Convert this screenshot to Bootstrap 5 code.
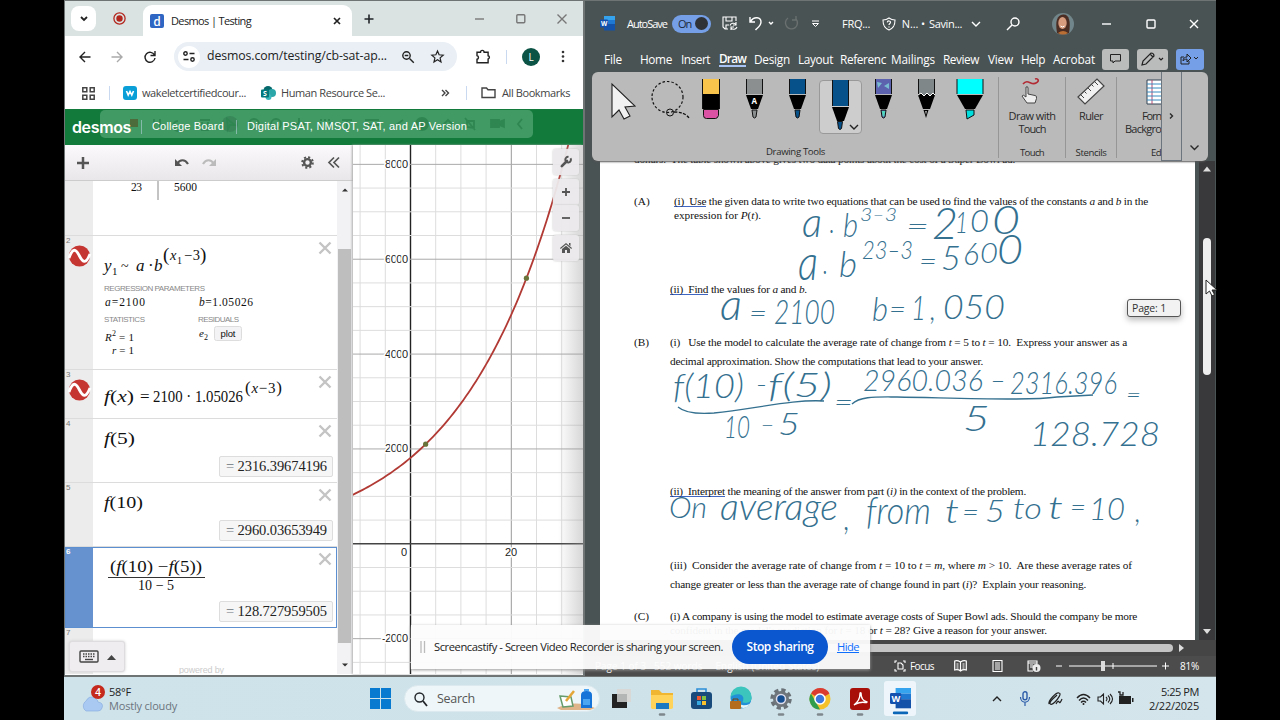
<!DOCTYPE html>
<html lang="en">
<head>
    <meta charset="UTF-8">
    <meta name="viewport" content="width=device-width, initial-scale=1.0">
    <link href="https://cdn.jsdelivr.net/npm/bootstrap@5.3.0/dist/css/bootstrap.min.css" rel="stylesheet">
    <title>Desmos | Testing</title>
    <style>
        body { background: #000; font-family: "Open Sans", "Noto Sans", sans-serif; font-size: 11px; line-height: 1.2; color: #222; overflow: hidden; }
        svg { display: block; flex: none; overflow: visible; }
        .fit { display: inline-block; white-space: nowrap; flex: none; }
        .line-icon { fill: none; stroke: currentColor; stroke-width: 1.4; }
        .bar-grid { display: grid; align-items: center; justify-items: start; }
        .desktop { width: 1152px; height: 720px; margin-left: 64px; }
        .windows { height: 677px; background: #6e7373; }

        /* browser window */
        .browser { width: 518px; height: 674px; margin: 1px 2px 0 1px; background: #fff; }
        .tab-strip { height: 35px; background: #dae3e2; grid-template-columns: 6px 42px 30px 209px 12px 111px 41px 41px 26px; color: #777; }
        .chev-btn { width: 25px; height: 25px; border-radius: 8px; background: #fff; color: #222; }
        .open-tab { width: 209px; height: 31px; margin-top: 4px; background: #fff; border-radius: 9px 9px 0 0; grid-template-columns: 7px 21px 162px 19px; color: #222; }
        .toolbar { height: 41px; grid-template-columns: 14px 32px 33px 30px 302px 30px 16px 39px 20px; background: #fff; }
        .address { width: 283px; height: 29px; border-radius: 15px; background: #e9eff5; grid-template-columns: 4px 29px 195px 29px 25px; font-size: 12.3px; }
        .site-info { width: 22px; height: 22px; border-radius: 50%; background: #fff; }
        .avatar-l { width: 18px; height: 18px; border-radius: 50%; background: #0b5345; color: #fff; font-size: 10px; }
        .bookmarks { height: 32px; grid-template-columns: 17px 27px 14px 19px 119px 20px 160px 25px 15px 21px 81px; color: #444; }
        .vline { width: 1px; height: 14px; background: #c9d9f0; }
        .green-bar { height: 36px; background: #127a3b; position: relative; color: #fff; font-family: "Liberation Sans", sans-serif; grid-template-columns: 7px 69px 11px 84px 11px 240px; }
        .ghost-bar { position: absolute; left: 35px; top: 1px; width: 433px; height: 28px; border-radius: 5px; background: #419963; color: #2f8651; }
        .green-bar > .above { position: relative; }
        .logo-text { font: 600 16px "Inter", sans-serif; }
        .calc { height: 529px; }

        /* expression list */
        .expr-panel { width: 288px; }
        .expr-tools { height: 36px; background: linear-gradient(#fbf9fb, #e9e7e9); border-bottom: 1px solid #ccc; grid-template-columns: 12px 97px 28px 99px 27px 20px; color: #555; }
        .expr-list { height: 493px; overflow: hidden; }
        .expr-row { border-bottom: 1px solid #dcdcdc; }
        .gutter { width: 28px; background: #ececec; font: 8px "Liberation Sans", sans-serif; color: #777; padding: 0 1px 1px; flex: none; }
        .expr-main { width: 244px; padding: 5px 4px 5px 10px; }
        .formula, .result { font-family: "Liberation Serif", serif; fill: #111; }
        .i-var { font-style: italic; }
        .cap { font: 8px "Liberation Sans", sans-serif; fill: #888; }
        .result { width: 114px; height: 21px; border: 1px solid #ddd; background: #f6f6f6; border-radius: 2px; font-size: 14.5px; line-height: 18px; padding-left: 6px; }
        .row-pick { outline: 1px solid #5b8fd0; outline-offset: -1px; }
        .row-pick .gutter { background: #6693d0; color: #fff; font-weight: bold; }
        .vscroll { width: 15px; background: #f2f1f3; padding: 6px 0 5px; }
        .vscroll-thumb { width: 13px; height: 394px; background: #bebebe; margin: 57px 0 20px 1px; }
        .kbd-btn { position: absolute; left: 69px; top: 641px; width: 56px; height: 31px; background: #efedef; border: 1px solid #dedcde; border-radius: 3px; box-shadow: 0 0 3px #ccc; }
        .graph-pane { width: 230px; position: relative; box-shadow: -1px 0 2px #aaa; overflow: hidden; font: 11px "Liberation Sans", sans-serif; }
        .graph-shade { position: absolute; right: 0; top: 0; width: 25px; height: 100%; background: linear-gradient(90deg, transparent, #9a9a9a66); }
        .graph-tools { position: absolute; right: 4px; top: 4px; width: 26px; color: #555; }
        .graph-tools > div { background: #ebe9ebf2; border-radius: 3px; box-shadow: 0 0 2px #bbb; height: 26px; margin-bottom: 4px; }

        /* word processor window */
        .word { width: 631px; height: 675px; margin-top: 1px; background: #4a5354; color: #fff; }
        .title-row { height: 45px; grid-template-columns: 15px 27px 45px 50px 27px 35px 28px 26px 44px 17px 30px 42px 36px 45px 50px 44px 20px; }
        .toggle-on { width: 39px; height: 18px; border-radius: 9px; background: #759fe6; color: #1c2a3d; padding: 0 3px 0 6px; }
        .knob { width: 13px; height: 13px; border-radius: 50%; background: #2f3338; }
        .menu-row { height: 26px; font-size: 11.8px; grid-template-columns: 19px 36px 41px 38px 35px 44px 42px 51px 52px 45px 33px 32px 49px 35px 39px 28px; }
        .menu-row .pick { border-bottom: 2px solid #a9c3f5; font-weight: 600; }
        .sq-btn { height: 21px; border-radius: 3px; background: #babbbb; color: #222; }
        .share-btn { background: #759fe6; }
        .ribbon { width: 616px; height: 89px; margin-left: 7px; background: #bababa; border-radius: 6px; color: #2a2a2a; position: relative; box-shadow: 0 1px 2px #555; z-index: 2; }
        .tool-cell { width: 43px; height: 54px; }
        .tool-pick { background: #cdcdcd; border: 1px solid #999; border-radius: 4px; }
        .rib-group { border-left: 1px solid #969696; height: 81px; margin-top: 5px; overflow: hidden; font-size: 11px; }
        .rib-foot { font-size: 9.6px; }
        .grp-touch { width: 67px; margin-left: 7px; }
        .grp-ruler { width: 51px; }
        .grp-format { width: 45px; }
        .rib-next { width: 21px; }
        .work { height: 479px; }
        .page { width: 595px; height: 479px; margin-left: 15px; background: #fff; color: #111; overflow: hidden; font: 11.3px/14px "Liberation Serif", serif; }
        .page .mark-col { width: 70px; padding-left: 34px; flex: none; }
        .page p { margin: 0; height: 14px; }
        .page .clip-line { margin: -9px 0 0 34px; }
        .part-a { margin-top: 28px; }
        .part-b { margin-top: 39px; }
        .part-c { margin-top: 18px; }
        .page .sp5 { margin-top: 5px; }
        .page .sp60 { margin-top: 60px; }
        .page .sp116 { margin-top: 116px; }
        .gram { border-bottom: 1px solid #3f66c0; display: inline-block; height: 13px; }
        .word-scroll { width: 16px; margin-left: 4px; background: #39393b; }
        .word-thumb { width: 8px; height: 137px; background: #eee; border-radius: 4px; margin: 65px auto 253px; }
        .hscroll { height: 16px; background: #454545; padding-right: 31px; }
        .hthumb { width: 400px; height: 8px; border-radius: 4px; background: #c4c4c4; margin-right: 6px; }
        .status { height: 20px; background: #4c4c4c; grid-template-columns: 10px 299px 60px 38px 35px 29px 13px 93px 18px 30px; font-size: 10px; }

        /* things floating over both windows */
        .ink { position: absolute; left: 0; top: 0; width: 1280px; height: 720px; fill: #34708f; stroke: #34708f; stroke-width: 0; font: 300 30px "Lato", sans-serif; pointer-events: none; z-index: 3; }
        .ink path { fill: none; stroke-width: 1.3; }
        .page-tip { position: absolute; left: 1127px; top: 299px; width: 54px; height: 18px; border: 1px solid #555; border-radius: 3px; background: #f2f2f2; box-shadow: 0 3px 6px #bbb; color: #333; padding-left: 4px; z-index: 4; font-size: 10.5px; }
        .pointer { position: absolute; left: 1205px; top: 279px; z-index: 5; }
        .share-bar { position: absolute; left: 411px; top: 625px; width: 459px; height: 44px; background: #fcfcfcf5; box-shadow: 0 1px 3px #999; z-index: 6; grid-template-columns: 9px 14px 298px 105px 23px; font-size: 11.2px; }
        .stop-btn { width: 96px; height: 34px; background: #0b57d0; color: #fff; font-weight: 600; font-size: 12px; border: 0; border-radius: 17px; }

        /* taskbar */
        .taskbar { height: 43px; background: linear-gradient(90deg, #cfe3eb, #cde2e9 60%, #d5e5ec); grid-template-columns: 16px 29px 261px 34px 207px 40px 40px 39px 40px 39px 41px 34px 108px 28px 28px 28px 21px 21px 20px 61px; }
        .search-pill { width: 196px; height: 27px; border-radius: 14px; background: #eef6f9; border: 1px solid #dce9ee; grid-template-columns: 9px 23px 120px 37px; font-size: 12.5px; color: #555; }
        .task-pick { width: 32px; height: 35px; background: #eef6fb; border-radius: 3px; }
    </style>
</head>
<body>
<div class="desktop d-flex flex-column">
    <div class="windows d-flex">

        <!-- Browser -->
        <div class="browser">
            <div class="tab-strip bar-grid">
                <i></i>
                <div class="chev-btn d-flex align-items-center justify-content-center"><svg class="line-icon" width="8" height="5"><path d="M1 1l3 3 3-3" stroke-width="1.8"/></svg></div>
                <svg width="13" height="13"><circle cx="6.5" cy="6.5" r="5.6" fill="none" stroke="#b3261e" stroke-width="1.3"/><circle cx="6.5" cy="6.5" r="3.2" fill="#b3261e"/></svg>
                <div class="open-tab bar-grid">
                    <i></i>
                    <svg width="14" height="14"><rect width="14" height="14" rx="2" fill="#2f66c3"/><text x="3.5" y="11.5" font-size="12.5" font-weight="600" fill="#fff" font-family="Lato">d</text></svg>
                    <span class="fit" data-w="80">Desmos | Testing</span>
                    <svg class="line-icon" width="8" height="8"><path d="M1 1l6 6M7 1l-6 6" stroke-width="1.7"/></svg>
                </div>
                <i></i>
                <svg class="line-icon text-dark" width="10" height="10"><path d="M5 .5v9M.5 5h9" stroke-width="1.6"/></svg>
                <svg class="line-icon" width="10" height="10"><path d="M0 5h9"/></svg>
                <svg class="line-icon" width="10" height="10"><rect x=".8" y=".8" width="8" height="8" rx="1"/></svg>
                <svg class="line-icon" width="10" height="10"><path d="M.5.5l9 9M9.5.5l-9 9"/></svg>
            </div>
            <div class="toolbar bar-grid">
                <i></i>
                <svg class="line-icon" width="12" height="12"><path d="M11.5 6H1.5M6 1L1 6l5 5"/></svg>
                <svg class="line-icon" width="12" height="12" color="#aaa"><path d="M.5 6h10M6 1l5 5-5 5"/></svg>
                <svg class="line-icon" width="12" height="12"><path d="M10.500 4A5 5 0 1 0 11 7M11 0v4.500H6.500"/></svg>
                <div class="address bar-grid">
                    <i></i>
                    <div class="site-info d-flex align-items-center justify-content-center"><svg class="line-icon" width="12" height="11"><circle cx="2.500" cy="2.500" r="1.700"/><path d="M6.500 2.500h5M.5 8.500h5"/><circle cx="9.500" cy="8.500" r="1.700"/></svg></div>
                    <span class="fit" data-w="180">desmos.com/testing/cb-sat-ap...</span>
                    <svg class="line-icon" width="12" height="12"><circle cx="4.500" cy="4.500" r="3.700"/><path d="M7.500 7.500l4.300 4.300M2.700 4.500h3.600"/></svg>
                    <svg class="line-icon" width="13" height="13"><path d="M6.500 1l1.600 3.800 4.100.4-3.100 2.700.9 4-3.500-2.100L3 11.900l.9-4L.8 5.200l4.100-.4z" stroke-width="1.200"/></svg>
                </div>
                <svg class="line-icon" width="15" height="15"><path d="M1 3.200h3.500a1.800 1.800 0 0 1 3.600 0h4v3.500a1.700 1.700 0 0 1 0 3.300v3.700H1v-3.400a1.900 1.900 0 0 0 0-3.700z"/></svg>
                <i class="vline"></i>
                <div class="avatar-l d-flex align-items-center justify-content-center">L</div>
                <svg width="4" height="13" fill="#333"><circle cx="2" cy="2" r="1.300"/><circle cx="2" cy="6.500" r="1.300"/><circle cx="2" cy="11" r="1.300"/></svg>
            </div>
            <div class="bookmarks bar-grid">
                <i></i>
                <svg class="line-icon" width="13" height="13"><path d="M.8.8h4v4h-4zM8.200.8h4v4h-4zM.8 8.200h4v4h-4zM8.200 8.200h4v4h-4z" stroke-width="1.500"/></svg>
                <i class="vline"></i>
                <svg width="14" height="14"><rect width="14" height="14" rx="3" fill="#0b9fd8"/><path d="M3.500 5l1.700 4L7 5.500 8.800 9l1.700-4" stroke="#fff" stroke-width="1.600" fill="none"/></svg>
                <span class="fit" data-w="104">wakeletcertifiedcour...</span>
                <svg width="15" height="14"><circle cx="7" cy="4.500" r="4.500" fill="#05686b"/><circle cx="11" cy="7" r="4" fill="#2aa5a8"/><circle cx="7.500" cy="11" r="3" fill="#37b6bb"/><rect y="3.500" width="8" height="8" rx="1" fill="#03787c"/><text x="2" y="10" font-size="7" font-weight="700" fill="#fff">S</text></svg>
                <span class="fit" data-w="104">Human Resource Se...</span>
                <svg class="line-icon" width="8" height="8"><path d="M1 1l3 3-3 3M4.500 1l3 3-3 3"/></svg>
                <i class="vline"></i>
                <svg class="line-icon" width="15" height="12"><path d="M1 10.500V1h4.500l1.500 1.800h7v7.700z"/></svg>
                <span class="fit" data-w="68">All Bookmarks</span>
            </div>
            <div class="green-bar bar-grid">
                <div class="ghost-bar"><svg width="433" height="28" fill="none" stroke="currentColor" stroke-width="1.800">
                    <rect x="30" y="9" width="8" height="8" fill="#4d6c3c" stroke="none"/>
                    <path d="M54 9v9M60 9v9M78 11a5 5 0 1 0 5 4M100 10h10M102 12v8h6v-8"/><circle cx="130" cy="14" r="8" fill="#38885a" stroke="none"/><path d="M127 9l8 6h-5l-2 4z"/><circle cx="154" cy="14" r="5"/><circle cx="176" cy="14" r="5"/><path d="M199 8v12M193 14h12"/><path d="M220 10h10v8h-10z" stroke-dasharray="2"/><path d="M242 10h10M247 10v9M265 10h14M265 15h14M293 17l10-7"/><circle cx="322" cy="14" r="6" fill="currentColor"/><path d="M342 16l6-6 6 6M365 8l10 12M367 17V11h7v7z"/><path d="M391 10h8v7h-8z M399 12l5-2v7l-5-2z" fill="currentColor"/><path d="M422 9l-4 5 4 5"/></svg></div>
                <i></i>
                <span class="above fit logo-text" data-w="59">desmos</span>
                <i class="above vline opacity-50"></i>
                <span class="above fit" data-w="72">College Board</span>
                <i class="above vline opacity-50"></i>
                <span class="above fit" data-w="220">Digital PSAT, NMSQT, SAT, and AP Version</span>
            </div>
            <div class="calc d-flex">
                <div class="expr-panel">
                    <div class="expr-tools bar-grid">
                        <i></i>
                        <svg class="line-icon" width="12" height="12"><path d="M6 0v12M0 6h12" stroke-width="2.500"/></svg>
                        <svg class="line-icon" width="15" height="10"><path d="M14 6C11 1 6 1 3 6" stroke-width="2.200"/><path d="M1 1v7h7z" fill="currentColor" stroke="none"/></svg>
                        <svg class="line-icon" width="15" height="10" color="#bbb"><path d="M1 6C4 1 9 1 12 6" stroke-width="2.200"/><path d="M14 1v7H7z" fill="currentColor" stroke="none"/></svg>
                        <svg class="line-icon" width="13" height="13"><circle cx="6.500" cy="6.500" r="3.400" stroke-width="2.400"/><circle cx="6.500" cy="6.500" r="5.300" stroke-width="2" stroke-dasharray="2.080"/></svg>
                        <svg class="line-icon" width="12" height="11"><path d="M6 .5l-5 5 5 5M11 .5l-5 5 5 5" stroke-width="1.700"/></svg>
                    </div>
                    <div class="d-flex">
                        <div class="expr-list">
                            <div class="expr-row d-flex">
                                <div class="gutter"></div>
                                <svg class="formula" width="244" height="54" font-size="11.500"><text x="38" y="10" textLength="11">23</text><path d="M65 0v19" stroke="#888"/><text x="81" y="10" textLength="23">5600</text></svg>
                            </div>
                            <div class="expr-row d-flex">
                                <div class="gutter">2<svg width="26" height="22"><use href="#wave" x="3"/></svg></div>
                                <div class="expr-main d-flex justify-content-between">
                                    <svg class="formula" width="200" height="123" font-size="17">
                                        <g class="i-var"><text x="1" y="30">y</text><text x="33" y="30">a</text><text x="51" y="30">b</text><text x="67" y="19" font-size="14.500">x</text></g>
                                        <text x="9" y="34" font-size="11">1</text><text x="18" y="30" font-size="14">~</text><text x="45" y="30">·</text><text x="60" y="20" font-size="19">(</text><text x="74" y="23" font-size="10">1</text><text x="81" y="19" font-size="14.500" textLength="16">−3</text><text x="97" y="20" font-size="19">)</text>
                                        <text x="1" y="50" class="cap" textLength="101">REGRESSION PARAMETERS</text>
                                        <text x="2" y="65" font-size="11.500" textLength="40"><tspan class="i-var">a</tspan>=2100</text><text x="96" y="65" font-size="11.500" textLength="54"><tspan class="i-var">b</tspan>=1.05026</text>
                                        <text x="1" y="81" class="cap" textLength="41">STATISTICS</text><text x="95" y="81" class="cap" textLength="41">RESIDUALS</text>
                                        <text x="2" y="100" font-size="11" class="i-var">R</text><text x="9" y="95" font-size="8">2</text><text x="16" y="100" font-size="11" textLength="15">=1</text>
                                        <text x="9" y="113" font-size="11" textLength="22"><tspan class="i-var">r</tspan>=1</text>
                                        <text x="96" y="96" font-size="11" class="i-var">e</text><text x="101" y="99" font-size="8">2</text>
                                        <rect x="111.500" y="85.500" width="27" height="14" rx="2" fill="#f3f3f5" stroke="#ddd"/><text x="117.500" y="96" font-size="9.500" textLength="15" font-family="Liberation Sans">plot</text>
                                    </svg>
                                    <svg width="16" height="14"><use href="#cross"/></svg>
                                </div>
                            </div>
                            <div class="expr-row d-flex">
                                <div class="gutter">3<svg width="26" height="22"><use href="#wave" x="3"/></svg></div>
                                <div class="expr-main d-flex justify-content-between">
                                    <svg class="formula" width="190" height="38" font-size="17"><text x="1" y="27" textLength="30" lengthAdjust="spacingAndGlyphs"><tspan class="i-var">f</tspan>(<tspan class="i-var">x</tspan>)</text><text x="37" y="27">=</text><text x="50" y="27" textLength="90" lengthAdjust="spacingAndGlyphs">2100 · 1.05026</text><text x="142" y="18" font-size="15" textLength="37"><tspan font-size="17">(</tspan><tspan class="i-var">x</tspan>−3<tspan font-size="17">)</tspan></text></svg>
                                    <svg width="16" height="14"><use href="#cross"/></svg>
                                </div>
                            </div>
                            <div class="expr-row d-flex">
                                <div class="gutter">4</div>
                                <div class="expr-main">
                                    <div class="d-flex justify-content-between"><svg class="formula" width="120" height="32" font-size="17"><text x="1" y="20" textLength="31" lengthAdjust="spacingAndGlyphs"><tspan class="i-var">f</tspan>(5)</text></svg><svg width="16" height="14"><use href="#cross"/></svg></div>
                                    <div class="result ms-auto"><span class="fit" data-w="101"><span class="text-secondary">=</span> 2316.39674196</span></div>
                                </div>
                            </div>
                            <div class="expr-row d-flex">
                                <div class="gutter">5</div>
                                <div class="expr-main">
                                    <div class="d-flex justify-content-between"><svg class="formula" width="120" height="32" font-size="17"><text x="1" y="20" textLength="39" lengthAdjust="spacingAndGlyphs"><tspan class="i-var">f</tspan>(10)</text></svg><svg width="16" height="14"><use href="#cross"/></svg></div>
                                    <div class="result ms-auto"><span class="fit" data-w="101"><span class="text-secondary">=</span> 2960.03653949</span></div>
                                </div>
                            </div>
                            <div class="expr-row row-pick d-flex">
                                <div class="gutter">6</div>
                                <div class="expr-main">
                                    <div class="d-flex justify-content-between"><svg class="formula" width="120" height="49" font-size="16"><text x="7" y="20" textLength="92" lengthAdjust="spacingAndGlyphs">(<tspan class="i-var">f</tspan>(10) −<tspan class="i-var">f</tspan>(5))</text><path d="M5 25.500h97" stroke="#333"/><text x="35" y="38" font-size="14.500" textLength="36" lengthAdjust="spacingAndGlyphs">10 − 5</text></svg><svg width="16" height="14"><use href="#cross"/></svg></div>
                                    <div class="result ms-auto"><span class="fit" data-w="101"><span class="text-secondary">=</span> 128.727959505</span></div>
                                </div>
                            </div>
                            <div class="d-flex">
                                <div class="gutter">7</div>
                                <svg width="244" height="46"><text x="86" y="45" font-size="9" fill="#ccc" textLength="45" font-family="Liberation Sans">powered by</text></svg>
                            </div>
                        </div>
                        <div class="vscroll">
                            <svg width="15" height="5"><path d="M5 4.500l3-3 3 3z" fill="#333"/></svg>
                            <div class="vscroll-thumb"></div>
                            <svg width="15" height="5"><path d="M5 .5l3 3 3-3z" fill="#333"/></svg>
                        </div>
                    </div>
                </div>
                <div class="graph-pane">
                    <svg id="graph" width="230" height="531"></svg>
                    <div class="graph-shade"></div>
                    <div class="graph-tools">
                        <div class="d-flex align-items-center justify-content-center"><svg width="12" height="12" viewBox="0 0 12 12"><path d="M1.800 10.200L7 5" stroke="#555" stroke-width="2.600" stroke-linecap="round"/><path d="M10.500 2.200A2.800 2.800 0 1 1 8.500.9" fill="none" stroke="#555" stroke-width="2"/></svg></div>
                        <div class="mb-0 d-flex align-items-center justify-content-center"><svg class="line-icon" width="8" height="8"><path d="M4 0v8M0 4h8" stroke-width="1.800"/></svg></div>
                        <div class="d-flex align-items-center justify-content-center"><svg class="line-icon" width="8" height="8"><path d="M0 4h8" stroke-width="1.800"/></svg></div>
                        <div class="d-flex align-items-center justify-content-center"><svg width="12" height="10"><path d="M6 0l6 5-.7.900L6 1.600.7 5.900 0 5zM2 6l4-3.300L10 6v4H7V7H5v3H2zM9 0h1.500v3L9 2z" fill="#555"/></svg></div>
                    </div>
                </div>
            </div>
        </div>

        <!-- Word processor -->
        <div class="word">
            <div class="title-row bar-grid">
                <i></i>
                <svg width="15" height="15"><use href="#wordlogo"/></svg>
                <span class="fit" data-w="40">AutoSave</span>
                <div class="toggle-on d-flex align-items-center justify-content-between"><span class="fit" data-w="13">On</span><i class="knob"></i></div>
                <svg class="line-icon" width="16" height="15"><path d="M6 13H3L1 11V1h13v4M4 1v4h6V1M4 13V9h3M8 9.500a3.500 3.500 0 0 1 6-1M14 6v3h-3M15 11a3.500 3.500 0 0 1-6 1M9 14v-3h3" stroke-width="1.100"/></svg>
                <svg class="line-icon" width="26" height="15"><path d="M1 1v5h5M1.500 5.500C5 0 12 1 12 6c0 4-4 6-5.500 8M20 6l2 2 2-2"/></svg>
                <svg class="line-icon" width="15" height="15" color="#69706f"><path d="M12 3A6 6 0 1 1 4 2M12 0v4H8"/></svg>
                <svg class="line-icon" width="8" height="8"><path d="M0 1h7" stroke-width="1"/><path d="M.5 3.500h6l-3 3z" stroke-width="1"/></svg>
                <span class="fit ms-1" data-w="28">FRQ...</span>
                <svg class="line-icon" width="14" height="14"><path d="M7 1c2 1.500 4 2 6 2 0 5-1 8-6 10C2 11 1 8 1 3c2 0 4-.5 6-2z" stroke-width="1.100"/><path d="M5.300 5.300c.3-2 3.400-1.600 3.200.2C8.300 6.500 7 6.700 7 8M7 9.500v1" stroke-width="1.200"/></svg>
                <span class="fit" data-w="26">&nbsp;N... •</span>
                <span class="fit" data-w="33">Savin...</span>
                <svg class="line-icon" width="10" height="6"><path d="M1 1l4 4 4-4"/></svg>
                <svg class="line-icon" width="13" height="13"><circle cx="8" cy="5" r="4"/><path d="M5 8l-5 5"/></svg>
                <svg width="22" height="22"><circle cx="11" cy="11" r="11" fill="#71868b"/><path d="M5 20C3 8 5 2 11 1.500S19 8 17 20q-6 3-12 0z" fill="#4b2d24"/><ellipse cx="10.500" cy="10" rx="4.200" ry="6" fill="#d79b7e"/><path d="M8.500 13q2 2 4 0" stroke="#fff" fill="none"/><path d="M6 20q5-4 10 0-5 3-10 0z" fill="#ba6f34"/></svg>
                <svg class="line-icon" width="10" height="10"><path d="M0 5h9"/></svg>
                <div class="d-flex"><svg class="line-icon" width="43" height="10"><rect x="1" y="1" width="8" height="8" rx="1"/></svg><svg class="line-icon" width="10" height="10"><path d="M1 1l8 8M9 1L1 9"/></svg></div>
            </div>
            <div class="menu-row bar-grid">
                <i></i>
                <span class="fit" data-w="18">File</span><span class="fit" data-w="32">Home</span><span class="fit" data-w="29">Insert</span><span class="fit pick" data-w="27">Draw</span><span class="fit" data-w="36">Design</span><span class="fit" data-w="35">Layout</span><span class="fit" data-w="46">Referenc</span><span class="fit" data-w="44">Mailings</span><span class="fit" data-w="36">Review</span><span class="fit" data-w="25">View</span><span class="fit" data-w="24">Help</span><span class="fit" data-w="42">Acrobat</span>
                <div class="sq-btn px-2 d-flex align-items-center"><svg class="line-icon" width="11" height="10"><path d="M.5.5h10v6.500H5L3 9V7H.5z" stroke-width="1"/></svg></div>
                <div class="sq-btn px-1 d-flex align-items-center"><svg class="line-icon" width="23" height="14"><path d="M1 13l1-4 8-8q3 0 3 3l-8 8zM9 2l3 3M18 6l2 2 2-2" stroke-width="1.200"/></svg></div>
                <div class="sq-btn share-btn px-1 d-flex align-items-center"><svg class="line-icon" width="20" height="12"><path d="M4 4H1v7h8V8M3 8c0-3 2-4 4-4V1l4 4-4 4V6C5 6 4 7 3 8zM14 4l2 2 2-2" stroke-width="1"/></svg></div>
            </div>
            <div class="ribbon d-flex">
                <div class="d-flex flex-column align-items-center pt-2">
                    <div class="d-flex align-items-start">
                        <svg width="54" height="54"><path d="M20 4v33l7-7 5 9 6-3-5-9 10-1z" fill="#f2f2f2" stroke="#222" stroke-width="1.100"/></svg>
                        <svg width="44" height="54" fill="none" stroke="#111"><circle cx="21.500" cy="17" r="15.500" stroke-dasharray="2.500 2" stroke-width="1.200"/><circle cx="24" cy="32.500" r="3.500"/><path d="M28 32q11 0 15 6" stroke-dasharray="3 1.500" stroke-width="1.400"/></svg>
                        <svg class="tool-cell" viewBox="0 0 43 54"><path d="M13 -1h16v15H13z" fill="#f8c44c"/><path d="M12 14h18v15H12z"/><path d="M13.500 29.500h15v6q-1 3-3 3h-9q-3 0-3-3z" fill="#db52a5" stroke="#111"/><path d="M12.500-1v30M29.500-1v30" stroke="#111"/></svg>
                        <svg class="tool-cell" viewBox="0 0 43 54"><use href="#pen" fill="#8b8f90"/><text x="18.500" y="24" font-size="8" font-weight="700" fill="#fff">A</text></svg>
                        <svg class="tool-cell" viewBox="0 0 43 54"><use href="#pen" fill="#07518b"/></svg>
                        <div class="tool-cell tool-pick"><svg width="41" height="52"><path d="M12.500-1h16v26h-16z" fill="#07518b"/><path d="M12.500-1v26M28.500-1v26" stroke="#111"/><path d="M12 26h17l-5 14h-7z"/><path d="M17.500 40.500h5l-1 7q-1.500 2-3 0z" fill="#07518b" stroke="#111"/><path d="M30 44l4 4 4-4" fill="none" stroke="#222" stroke-width="1.400"/></svg></div>
                        <svg class="tool-cell" viewBox="0 0 43 54"><use href="#pen" fill="#5c62ad"/><path d="M15 2l5 1-4 5zM22 6l5-3v6z" fill="#79bcd2"/><path d="M19.800 31h3.500l-1 5.500h-1.500z" fill="#50d8be"/></svg>
                        <svg class="tool-cell" viewBox="0 0 43 54"><path d="M13.500-1h16v18h-16z" fill="#7f8788"/><path d="M13.500-1v16M29.500-1v16" stroke="#111"/><path d="M13 15l3-2 3 3 3-3 3 3 3-3 2 2-5 14h-7zM18.500 30h5l-2.500 8z"/><path d="M13 15l3-2 3 3 3-3 3 3 3-3 2 2" stroke="#fff" fill="none"/><path d="M20 31h2l-1 4z" fill="#aaa"/></svg>
                        <svg class="tool-cell" viewBox="0 0 43 54"><path d="M9-1h26v15H9z" fill="#0ff"/><path d="M9-1v15M35-1v15" stroke="#111"/><path d="M9 15h26l-8 14H17z"/><path d="M18 30h8v5l-7 4z" fill="#0dd" stroke="#111"/></svg>
                    </div>
                    <span class="fit rib-foot mt-2 pt-1 ms-2" data-w="59">Drawing Tools</span>
                </div>
                <div class="rib-group grp-touch d-flex flex-column align-items-center"><svg width="22" height="28"><path d="M2 7c5-6 8 2 13-1 4-2 2-5-1-4" stroke="#b22a33" stroke-width="1.600" fill="none"/><path d="M5 10q2-1 2 1v6l7 1.500q2 0 1.500 3L14 26H6l-5-7q1-2 4 1z" fill="#eee" stroke="#444"/></svg><span class="fit mt-1" data-w="47">Draw with</span><span class="fit" data-w="27">Touch</span><span class="fit rib-foot mt-auto" data-w="24">Touch</span></div>
                <div class="rib-group grp-ruler d-flex flex-column align-items-center"><svg width="28" height="28"><path d="M1 20L20 2l7 7L8 27z" fill="#f1f1f1" stroke="#444" stroke-width="1.200"/><path d="M4 18l3 3M7.500 14.500l2 2M11 11l3 3M14.500 7.500l2 2M18 5l3 3" stroke="#444"/></svg><span class="fit mt-1" data-w="24">Ruler</span><span class="fit rib-foot mt-auto" data-w="31">Stencils</span></div>
                <div class="rib-group grp-format d-flex flex-column align-items-end"><svg width="14" height="28"><path d="M0 3h16v24H0z" fill="#fff" stroke="#345"/><path d="M5 3v24" stroke="#b54a70"/><path d="M0 7h15M0 11h15M0 15h15M0 19h15M0 23h15" stroke="#368bc0"/></svg><span class="fit mt-1" data-w="19">Forn</span><span class="fit" data-w="36">Backgro</span><span class="fit rib-foot mt-auto" data-w="10">Ed</span></div>
                <div class="rib-next border border-secondary border-top-0 d-flex align-items-center justify-content-center"><svg class="line-icon" width="5" height="6"><path d="M1 .5l2.500 2.500L1 5.500"/></svg></div>
                <div class="d-flex align-items-end pb-2 ps-2"><svg class="line-icon" width="9" height="8"><path d="M.5.5l4 4 4-4"/></svg></div>
            </div>
            <div class="work d-flex">
                <div class="page">
                    <p class="clip-line"><span class="fit" data-w="381">dollars.&nbsp; The table shown above gives two data points about the cost of a Super Bowl ad.</span></p>
                    <div class="part-a d-flex">
                        <div class="mark-col">(A)</div>
                        <div>
                            <p class="ps-1"><span class="fit" data-w="474"><span class="gram">(i)&nbsp; Use</span> the given data to write two equations that can be used to find the values of the constants <i>a</i> and <i>b</i> in the</span></p>
                            <p class="ps-1"><span class="fit" data-w="87">expression for <i>P</i>(<i>t</i>).</span></p>
                            <p class="sp60"><span class="fit" data-w="137"><span class="gram">(ii)&nbsp; Find</span> the values for <i>a</i> and <i>b</i>.</span></p>
                        </div>
                    </div>
                    <div class="part-b d-flex">
                        <div class="mark-col">(B)</div>
                        <div>
                            <p><span class="fit" data-w="457">(i)&nbsp;&nbsp; Use the model to calculate the average rate of change from <i>t</i> = 5 to <i>t</i> = 10.&nbsp; Express your answer as a</span></p>
                            <p class="sp5"><span class="fit" data-w="313">decimal approximation. Show the computations that lead to your answer.</span></p>
                            <p class="sp116"><span class="fit" data-w="356"><span class="gram">(ii)&nbsp; Interpret</span> the meaning of the answer from part (<i>i)</i> in the context of the problem.</span></p>
                            <p class="sp60"><span class="fit" data-w="462">(iii)&nbsp; Consider the average rate of change from <i>t</i> = 10 to <i>t</i> = <i>m</i>, where <i>m</i> &gt; 10.&nbsp; Are these average rates of</span></p>
                            <p class="sp5"><span class="fit" data-w="416">change greater or less than the average rate of change found in part (<i>i</i>)?&nbsp; Explain your reasoning.</span></p>
                        </div>
                    </div>
                    <div class="part-c d-flex">
                        <div class="mark-col">(C)</div>
                        <div>
                            <p><span class="fit" data-w="467">(i) A company is using the model to estimate average costs of Super Bowl ads. Should the company be more</span></p>
                            <p><span class="fit" data-w="377">confident in the model's prediction for <i>t</i> = 18 or <i>t</i> = 28? Give a reason for your answer.</span></p>
                        </div>
                    </div>
                </div>
                <div class="word-scroll pt-1">
                    <svg width="16" height="8"><path d="M4 6.500l4-5 4 5z" fill="#ddd"/></svg>
                    <div class="word-thumb"></div>
                    <svg width="16" height="8"><path d="M4 1l4 5 4-5z" fill="#ddd"/></svg>
                </div>
            </div>
            <div class="hscroll d-flex align-items-center justify-content-end"><div class="hthumb"></div><svg width="6" height="8"><path d="M0 0l5 4-5 4z" fill="#ddd"/></svg></div>
            <div class="status bar-grid">
                <i></i>
                <span>Page 1 of 3 &nbsp; 552 words &nbsp;&nbsp;&nbsp; English (United States)</span>
                <span class="d-flex align-items-center gap-1"><svg class="line-icon" width="12" height="12"><path d="M3 1H1v2M9 1h2v2M3 11H1V9M9 11h2V9M4 3h3l2 2v4H4z" stroke-width="1.100"/></svg><span class="fit" data-w="24">Focus</span></span>
                <svg class="line-icon" width="13" height="12"><path d="M6.500 2C4 .5 2 .5.7 1v9c2-.5 4-.5 5.800 1 2-1.500 4-1.500 5.800-1V1C11 .5 9 .5 6.500 2v9M2.500 4h2M2.500 6h2M2.500 8h2M8.500 4h2M8.500 6h2M8.500 8h2" stroke-width="1.200"/></svg>
                <svg class="line-icon" width="12" height="12"><path d="M1 .5h9v11H1zM3 3h5M3 5h5M3 7h5M3 9h5" stroke-width="1.100"/></svg>
                <svg class="line-icon" width="14" height="12"><path d="M6 11H1V1h9v3M1 3h9M3 5h3M3 7h3" stroke-width="1.100"/><circle cx="9.500" cy="8" r="4" fill="#eee" stroke="none"/><path d="M9.500 7v3.500" stroke="#444"/></svg>
                <svg class="line-icon" width="8" height="8"><path d="M0 4h6" stroke-width="1"/></svg>
                <svg class="line-icon" width="88" height="12"><path d="M0 6h88M44 3v6" stroke-width="1"/><path d="M32 1h4v10h-4z" fill="#ddd" stroke="none"/></svg>
                <svg class="line-icon" width="8" height="8"><path d="M0 4h7M3.500.5v7" stroke-width="1"/></svg>
                <span class="fit" data-w="19">81%</span>
            </div>
        </div>
    </div>

    <!-- Taskbar -->
    <div class="taskbar bar-grid">
        <i></i>
        <svg width="26" height="28"><path d="M6 26a6 6 0 0 1 0-10q3-6 9-3 3 2 3 4 6 1 4 6-1 3-4 3z" fill="#a9c9f3" stroke="#82a8dc" stroke-width=".6"/><circle cx="18" cy="7" r="7" fill="#c4291c"/><text x="15" y="11" font-size="10.500" font-weight="600" fill="#fff">4</text></svg>
        <div class="lh-sm"><div><span class="fit" data-w="22">58°F</span></div><div class="text-secondary"><span class="fit" data-w="68">Mostly cloudy</span></div></div>
        <svg width="21" height="21" fill="#087bd1"><path d="M0 0h10v10H0zM11 0h10v10H11zM0 11h10v10H0zM11 11h10v10H11z"/></svg>
        <div class="search-pill bar-grid"><i></i><svg class="line-icon text-dark" width="13" height="14"><circle cx="5.500" cy="5.500" r="4.500"/><path d="M9 9l4 5" stroke-width="1.800"/></svg><span class="fit" data-w="38">Search</span><svg width="38" height="22"><path d="M0 20q18-9 38 0l-5 2H4z" fill="#dfb489"/><path d="M3 8l11 1 2 9-10 1z" fill="#fff" stroke="#669c6c" stroke-width="1.500"/><path d="M9 13l8-10" stroke="#e3a637" stroke-width="2.500"/><path d="M24 20V7q0-4 5.500-4T35 7v13z" fill="#1673d8"/><path d="M26 11h7v6h-7zM27 3V1h5v2" fill="#4da6f2"/></svg></div>
        <svg width="21" height="20"><path d="M1 5h15v14H1z" fill="#222"/><path d="M6 0h14v13H6z" fill="#d8d8d6"/><path d="M6 5h10v8H6z" fill="#b4b6b5"/></svg>
        <svg width="23" height="22"><path d="M0 2h8l3 3h11v15H0z" fill="#f0b631"/><path d="M0 7h22v13q-1 1-2 1H1l-1-1z" fill="#ffd35a"/><path d="M5 15h13v6H5z" fill="#1b78c2"/><use href="#rundot"/></svg>
        <svg width="21" height="21"><path d="M6 5V1h9v4" fill="none" stroke="#2d8fd8" stroke-width="1.600"/><rect y="4" width="21" height="17" rx="3" fill="#184b7c"/><path d="M6 8h4v4H6z" fill="#f05630"/><path d="M11 8h4v4h-4z" fill="#80c141"/><path d="M6 13h4v4H6z" fill="#36a9e0"/><path d="M11 13h4v4h-4z" fill="#fbc22e"/></svg>
        <svg width="22" height="23"><circle cx="11" cy="11" r="10.500" fill="#2190d6"/><path d="M.5 10A10.500 10.500 0 0 1 21.500 10c1 6-7 7-9 5 4-8-6-10-12-5z" fill="#3bc5bd"/><path d="M8 12q0 9 12 5-7 8-12 0z" fill="#e7f5f8"/><rect y="14" width="11" height="8" rx="1" fill="#b46c1d"/><path d="M3 14v-2h5v2" fill="none" stroke="#704011"/></svg>
        <svg width="22" height="22"><circle cx="11" cy="11" r="9" fill="none" stroke="#6a7278" stroke-width="3.500" stroke-dasharray="4.200 2.868"/><circle cx="11" cy="11" r="8" fill="#70777c"/><circle cx="11" cy="11" r="4.500" fill="#164f91" stroke="#dde" stroke-width="1.500"/><use href="#rundot"/></svg>
        <svg width="22" height="22"><circle cx="11" cy="11" r="10.500" fill="#f5c12a"/><path d="M11 11L2 5.500a10.500 10.500 0 0 1 18.500 0z" fill="#db3c30"/><path d="M2 5.500L11 21.500A10.500 10.500 0 0 1 2 5.500z" fill="#2f9d4c"/><circle cx="11" cy="11" r="5" fill="#3d78dc" stroke="#fff" stroke-width="1.500"/><use href="#rundot"/></svg>
        <svg width="21" height="22"><rect width="20" height="22" rx="3" fill="#a80f09"/><path d="M4 17c4-3 6-7 6-11q0-2 1-1c0 5 2 8 6 9q0 1-2 .5c-5-1-8 1-11 2.500z" fill="none" stroke="#fff" stroke-width="1.400"/><use href="#rundot" x="-1"/></svg>
        <div class="task-pick d-flex align-items-center justify-content-center"><svg width="21" height="21" viewBox="0 0 15 15"><use href="#wordlogo"/><path d="M3 17.800h9" stroke="#0b66b8" stroke-width="2" stroke-linecap="round"/></svg></div>
        <svg class="line-icon" width="10" height="6"><path d="M1 5l4-4 4 4"/></svg>
        <svg class="line-icon" width="11" height="15" color="#2b5ca8"><rect x="3" y=".8" width="4" height="8" rx="2"/><path d="M.5 6c0 7 9 7 9 0M5 11v4" stroke-width="1.200"/></svg>
        <svg class="line-icon" width="15" height="15"><path d="M1 13c-1-3 7-12 10-11 3 0-1 6-4 9s-5 3-5 1 4-5 7-8M8 13q2-4 3-2t3-3" stroke-width="1.200"/></svg>
        <svg class="line-icon" width="15" height="12"><path d="M1 5q6.500-7 13 0M3 7.500q4.500-5 9 0M5 9.500q2.500-2.500 5 0"/><circle cx="7.500" cy="11" r="1" fill="currentColor" stroke="none"/></svg>
        <svg class="line-icon" width="15" height="12"><path d="M1 4h2.500L6.500 1v10L3.500 8H1zM9 4q2 2 0 4M11 2.500q3.500 3.500 0 7M13 1q5 5 0 10" stroke-width="1.100"/></svg>
        <svg width="16" height="13"><path d="M1 4h12v8H1zM14 6h1.500v4H14z" fill="#222"/><path d="M0 0h2v3h3V0M3 6l3 3" stroke="#222" stroke-width="1.300" fill="none"/></svg>
        <div class="text-end lh-sm w-100"><div><span class="fit" data-w="38">5:25 PM</span></div><div><span class="fit" data-w="50">2/22/2025</span></div></div>
    </div>
</div>

<div class="kbd-btn d-flex align-items-center justify-content-center gap-2">
    <svg class="line-icon" width="20" height="13" color="#444"><rect x="1" y="1" width="18" height="11" rx="1"/><path d="M4 4h12M4 6.500h12" stroke-dasharray="1.500 1"/><path d="M6 9.500h8"/></svg>
    <svg width="9" height="6"><path d="M0 6l4.500-5L9 6z" fill="#444"/></svg>
</div>

<!-- handwriting layer over the page -->
<svg class="ink" id="ink">
    <path d="M678 407c8 7 22 7 36 6 40-4 80-14 110-12"/>
    <path d="M852 404c8-8 25-7 45-7 60 1 130 4 160 0l36-2"/>
</svg>

<div class="page-tip d-flex align-items-center"><span class="fit" data-w="34">Page: 1</span></div>
<svg class="pointer" width="12" height="18"><path d="M1 1v14l3.500-3 2.500 5 2.500-1.500L7 11h5z" fill="#fff" stroke="#222"/></svg>

<div class="share-bar bar-grid">
    <i></i>
    <svg width="6" height="12"><path d="M1 0v12M4.500 0v12" stroke="#bbb" stroke-width="1.300"/></svg>
    <span class="fit" data-w="289">Screencastify - Screen Video Recorder is sharing your screen.</span>
    <button class="stop-btn p-0"><span class="fit" data-w="67">Stop sharing</span></button>
    <a href="#" class="fit" data-w="22">Hide</a>
</div>

<svg width="0" height="0" class="position-absolute">
    <defs>
        <g id="cross"><path d="M2.500 1.500l11 11M13.500 1.500l-11 11" stroke="#c4c4c4" stroke-width="2.400"/></g>
        <g id="wave"><circle cx="10.500" cy="11" r="10.500" fill="#c53532"/><path d="M0 13C4 2 7 4 10.500 11S17 19 21 9" fill="none" stroke="#fff" stroke-width="2.800"/></g>
        <g id="pen"><path d="M13.500-1h16v15h-16z"/><path d="M13.500-1v15M29.500-1v15" stroke="#111"/><path d="M13 15h17l-5 14h-7z" fill="#000"/><path d="M19 30h5l-1 7q-1.500 2-3 0z" stroke="#111"/></g>
        <g id="rundot"><path d="M9 26.500h4" stroke="#7d878c" stroke-width="2.500" stroke-linecap="round"/></g>
        <g id="wordlogo"><path d="M4 0h11v4H4z" fill="#35a3ee"/><path d="M4 4h11v4H4z" fill="#1f78d1"/><path d="M4 8h11v6.500H4z" fill="#1352a8"/><rect y="3.500" width="8" height="8" rx="1" fill="#1450ad"/><text x="1" y="9.800" font-size="6.500" font-weight="700" fill="#fff">W</text></g>
    </defs>
</svg>

<script>
const NS = "http://www.w3.org/2000/svg";

function add(parent, tag, attrs, label) {
    const el = document.createElementNS(NS, tag);
    for (const key in attrs) el.setAttribute(key, attrs[key]);
    if (label) el.textContent = label;
    parent.appendChild(el);
    return el;
}

// Space each label out to the width given in data-w
document.querySelectorAll(".fit").forEach(el => {
    const gap = (el.dataset.w - el.getBoundingClientRect().width) / el.textContent.length;
    el.style.letterSpacing = gap + "px";
});

// Graph: scale, grid, curve y = 2100 * 1.05026^(x - 3) and the two data points
const graph = document.getElementById("graph");
const px = x => 57.5 + x * 5.04;
const py = y => 398.8 - y * 0.04743;

for (let x = -10; x <= 30; x += 5) {
    add(graph, "line", { x1: px(x), x2: px(x), y1: 0, y2: 531, stroke: x === 0 ? "#222" : x === 20 ? "#999" : "#ddd", "stroke-width": x === 0 ? 1.4 : 1 });
}
for (let y = -2500; y <= 8000; y += 500) {
    add(graph, "line", { x1: 0, x2: 230, y1: py(y), y2: py(y), stroke: y === 0 ? "#444" : y % 2000 === 0 ? "#aaa" : "#ddd", "stroke-width": y === 0 ? 1.6 : 1 });
}
[8000, 6000, 4000, 2000, -2000].forEach(y => {
    add(graph, "text", { x: 55, y: py(y) + 3.5, "text-anchor": "end", textLength: y < 0 ? 26 : 23, fill: "#222", stroke: "#fff", "stroke-width": 3, "paint-order": "stroke" }, String(y));
});
add(graph, "text", { x: 48, y: 411, fill: "#222" }, "0");
add(graph, "text", { x: 152, y: 411, fill: "#222", stroke: "#fff", "stroke-width": 3, "paint-order": "stroke" }, "20");

let d = "";
for (let x = -12; x <= 32; x += 0.5) {
    d += (d ? "L" : "M") + px(x) + " " + py(2100 * Math.pow(1.05026, x - 3));
}
add(graph, "path", { d: d, fill: "none", stroke: "#b23a35", "stroke-width": 1.8 });
[[3, 2100], [23, 5600]].forEach(p => add(graph, "circle", { cx: px(p[0]), cy: py(p[1]), r: 2.6, fill: "#68743a" }));

// Handwritten notes: text, left, baseline, width, size
const notes = [
    ["a", 802, 237, 20, 42], ["·", 829, 240, 5, 30], ["b", 843, 237, 15, 33],
    ["3–3", 860, 221, 37, 18], ["=", 906, 235, 23, 26], ["2", 932, 239, 26, 44], ["1", 955, 233, 13, 29], ["0", 970, 232, 19, 32], ["0", 992, 234, 28, 40],
    ["a", 798, 280, 20, 50], [".", 823, 274, 5, 34], ["b", 839, 277, 18, 35],
    ["23–3", 862, 259, 51, 25], ["=", 919, 270, 18, 24], ["5", 941, 270, 20, 34], ["6", 963, 265, 16, 32], ["0", 980, 263, 18, 27], ["0", 997, 264, 26, 42],
    ["a", 720, 320, 22, 44], ["=", 749, 322, 18, 25], ["2100", 774, 324, 61, 34], ["b", 872, 321, 16, 34], ["=", 889, 318, 17, 25], ["1", 911, 320, 15, 33], [",", 930, 320, 6, 32], ["050", 943, 319, 62, 33],
    ["f(10)", 673, 398, 71, 33], ["–", 756, 392, 11, 24], ["f(5)", 768, 397, 64, 34],
    ["10", 724, 438, 26, 32], ["–", 760, 432, 15, 22], ["5", 778, 435, 22, 32], ["=", 834, 411, 19, 26],
    ["2960.036", 863, 391, 120, 29], ["–", 990, 388, 16, 24], ["2316.396", 1010, 394, 107, 31], ["=", 1126, 402, 15, 22],
    ["5", 963, 431, 27, 36], ["128.728", 1030, 446, 130, 34],
    ["On", 669, 518, 38, 29], ["average", 720, 520, 118, 38], [",", 844, 530, 6, 36], ["from", 866, 524, 65, 38],
    ["t", 945, 523, 14, 34], ["=", 962, 521, 17, 26], ["5", 985, 522, 20, 32], ["to", 1013, 519, 29, 29], ["t", 1048, 519, 15, 32], ["=", 1070, 516, 16, 26], ["10", 1089, 520, 36, 32], [",", 1135, 522, 6, 32]
];
const ink = document.getElementById("ink");
notes.forEach(n => add(ink, "text", { x: n[1], y: n[2], textLength: n[3], lengthAdjust: "spacingAndGlyphs", "font-size": n[4], "font-style": "italic" }, n[0]));
</script>

<script src="https://cdn.jsdelivr.net/npm/bootstrap@5.3.0/dist/js/bootstrap.bundle.min.js"></script>
</body>
</html>
